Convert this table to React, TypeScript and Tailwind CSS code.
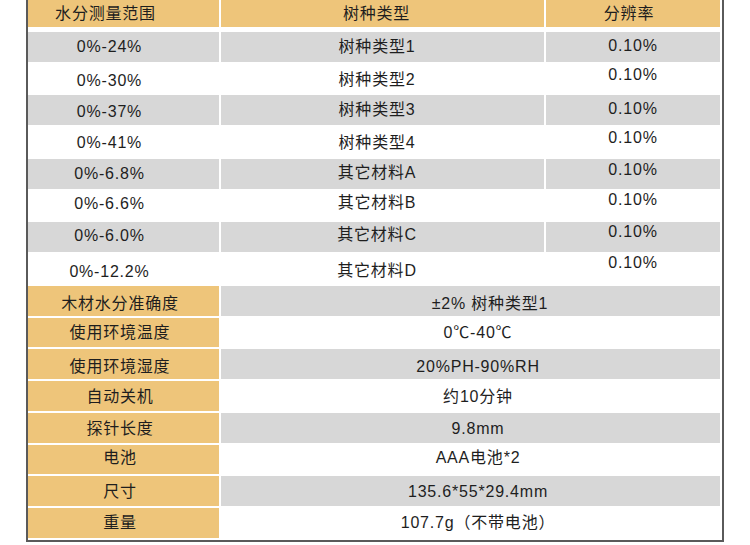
const font = { fontFamily: '"Liberation Sans", "Noto Sans CJK SC", sans-serif' };

type TopRow = { range: string; kind: string; res: string; dy: [number, number, number] };

const topRows: TopRow[] = [
  { range: '0%-24%', kind: '树种类型1', res: '0.10%', dy: [0, 0, -1] },
  { range: '0%-30%', kind: '树种类型2', res: '0.10%', dy: [3, 2, -3] },
  { range: '0%-37%', kind: '树种类型3', res: '0.10%', dy: [2, 0, -1] },
  { range: '0%-41%', kind: '树种类型4', res: '0.10%', dy: [1, 1, -4] },
  { range: '0%-6.8%', kind: '其它材料A', res: '0.10%', dy: [0, -1, -4] },
  { range: '0%-6.6%', kind: '其它材料B', res: '0.10%', dy: [-1, -2, -5] },
  { range: '0%-6.0%', kind: '其它材料C', res: '0.10%', dy: [-1, -2, -5] },
  { range: '0%-12.2%', kind: '其它材料D', res: '0.10%', dy: [3, 2, -6] },
];

// dx nudges a value off centre where the source image has it that way
const specs: { label: string; value: string; dy: number; dx?: number }[] = [
  { label: '木材水分准确度', value: '±2% 树种类型1', dy: 3, dx: 24 },
  { label: '使用环境温度', value: '0℃-40℃', dy: 1 },
  { label: '使用环境湿度', value: '20%PH-90%RH', dy: 3 },
  { label: '自动关机', value: '约10分钟', dy: 1 },
  { label: '探针长度', value: '9.8mm', dy: 1 },
  { label: '电池', value: 'AAA电池*2', dy: -1 },
  { label: '尺寸', value: '135.6*55*29.4mm', dy: 1 },
  { label: '重量', value: '107.7g（不带电池）', dy: 0 },
];

function Cell({ className, dy, dx = 0, children }: { className: string; dy: number; dx?: number; children: React.ReactNode }) {
  return (
    <div className={`flex items-center justify-center ${className}`}>
      <span style={{ marginTop: dy * 2, marginLeft: dx }}>{children}</span>
    </div>
  );
}

export default function App() {
  return (
    <div className="min-h-[545px] w-[750px] bg-white pl-[26px]" style={font}>
      <div className="w-[698px] border-b-2 border-l-2 border-r-2 border-[#5a5a5a] pb-[2px] pr-[2px] text-[16px] tracking-[0.8px] text-[#1e1e1e]">
        <div className="grid grid-cols-[191px_323px_174px] gap-[2px] auto-rows-[29.75px]">
          {/* header */}
          <div className="flex h-[27px] items-center justify-center bg-[#eec57a] pr-[36px]">水分测量范围</div>
          <div className="flex h-[27px] items-center justify-center bg-[#eec57a] pr-[12px]">树种类型</div>
          <div className="flex h-[27px] items-center justify-center bg-[#eec57a] pr-[8px]">分辨率</div>

          {topRows.map((r, i) => {
            const bg = i % 2 === 0 ? 'bg-[#d7d7d7]' : 'bg-white';
            return [
              <Cell key={`a${i}`} className={`${bg} pr-[28px]`} dy={r.dy[0]}>{r.range}</Cell>,
              <Cell key={`b${i}`} className={`${bg} pr-[11px]`} dy={r.dy[1]}>{r.kind}</Cell>,
              <Cell key={`c${i}`} className={bg} dy={r.dy[2]}>{r.res}</Cell>,
            ];
          })}

          {specs.map((s, i) => {
            const bg = i % 2 === 0 ? 'bg-[#d7d7d7]' : 'bg-white';
            return [
              <Cell key={`l${i}`} className="bg-[#eec57a] pr-[7px]" dy={s.dy}>{s.label}</Cell>,
              <Cell key={`v${i}`} className={`${bg} col-span-2 pl-[15px]`} dy={s.dy} dx={s.dx}>{s.value}</Cell>,
            ];
          })}
        </div>
      </div>
    </div>
  );
}
